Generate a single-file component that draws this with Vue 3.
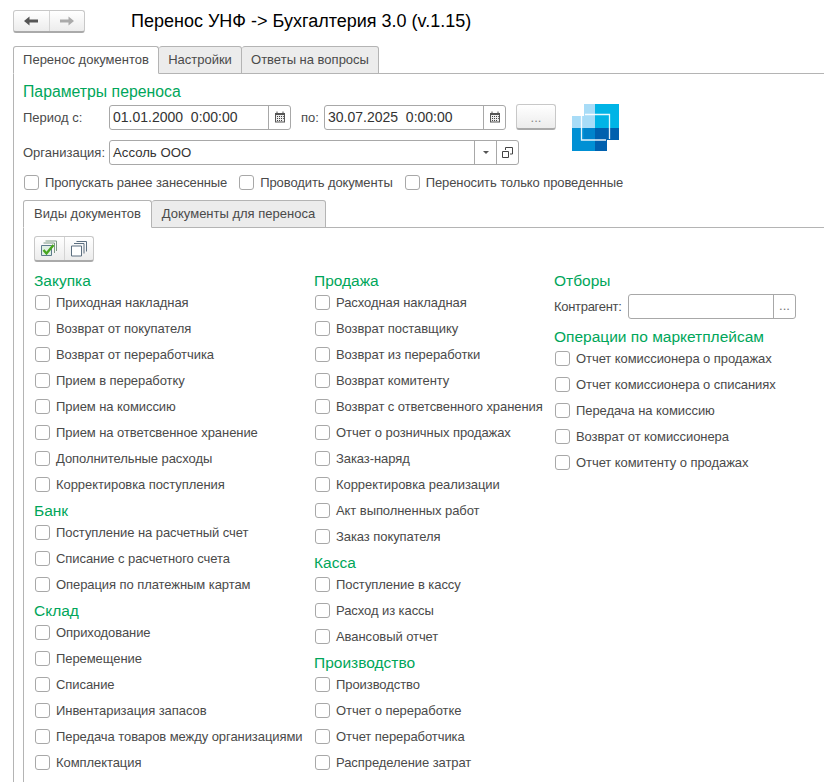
<script setup>
const columns = [
  [
    { title: 'Закупка', items: ['Приходная накладная', 'Возврат от покупателя', 'Возврат от переработчика', 'Прием в переработку', 'Прием на комиссию', 'Прием на ответсвенное хранение', 'Дополнительные расходы', 'Корректировка поступления'] },
    { title: 'Банк', items: ['Поступление на расчетный счет', 'Списание с расчетного счета', 'Операция по платежным картам'] },
    { title: 'Склад', items: ['Оприходование', 'Перемещение', 'Списание', 'Инвентаризация запасов', 'Передача товаров между организациями', 'Комплектация'] }
  ],
  [
    { title: 'Продажа', items: ['Расходная накладная', 'Возврат поставщику', 'Возврат из переработки', 'Возврат комитенту', 'Возврат с ответсвенного хранения', 'Отчет о розничных продажах', 'Заказ-наряд', 'Корректировка реализации', 'Акт выполненных работ', 'Заказ покупателя'] },
    { title: 'Касса', items: ['Поступление в кассу', 'Расход из кассы', 'Авансовый отчет'] },
    { title: 'Производство', items: ['Производство', 'Отчет о переработке', 'Отчет переработчика', 'Распределение затрат'] }
  ]
]
const market = ['Отчет комиссионера о продажах', 'Отчет комиссионера о списаниях', 'Передача на комиссию', 'Возврат от комиссионера', 'Отчет комитенту о продажах']
</script>

<template>
  <div class="page">
    <header class="top">
      <div class="nav">
        <span class="nav-btn">
          <svg width="16" height="12" viewBox="0 0 16 12"><path d="M1 6l5.500-4.500v3H15v3H6.500v3z" fill="#555"/></svg>
        </span>
        <span class="nav-btn">
          <svg width="16" height="12" viewBox="0 0 16 12"><path d="M15 6L9.500 1.500v3H1v3h8.500v3z" fill="#aaa"/></svg>
        </span>
      </div>
      <h1 class="title">Перенос УНФ -&gt; Бухгалтерия 3.0 (v.1.15)</h1>
    </header>

    <nav class="tabs outer-tabs">
      <span class="tab active t1">Перенос документов</span>
      <span class="tab t2">Настройки</span>
      <span class="tab t3">Ответы на вопросы</span>
    </nav>
    <section class="panel outer-panel">
      <div class="heading params-title">Параметры переноса</div>
      <div class="param-area">
        <div class="param-fields">
          <div class="row period">
            <label class="lbl">Период с:</label>
            <div class="field date">
              <span class="val">01.01.2000&nbsp; 0:00:00</span>
              <span class="fbtn">
                <svg width="12" height="12" viewBox="0 0 12 12"><path d="M1 2h10v9.500H1z" fill="#555"/><path d="M3 .5v2M9 .5v2" stroke="#555"/><path d="M2 4h8v6.500H2z" fill="#eee"/><path d="M3 5h1v1H3zM5 5h1v1H5zM7 5h1v1H7zM3 7h1v1H3zM5 7h1v1H5zM7 7h1v1H7zM9 5h.800v1H9zM9 7h.800v1H9zM3 9h1v1H3zM5 9h1v1H5zM7 9h1v1H7z" fill="#444"/></svg>
              </span>
            </div>
            <label class="lbl to">по:</label>
            <div class="field date">
              <span class="val">30.07.2025&nbsp; 0:00:00</span>
              <span class="fbtn">
                <svg width="12" height="12" viewBox="0 0 12 12"><path d="M1 2h10v9.500H1z" fill="#555"/><path d="M3 .5v2M9 .5v2" stroke="#555"/><path d="M2 4h8v6.500H2z" fill="#eee"/><path d="M3 5h1v1H3zM5 5h1v1H5zM7 5h1v1H7zM3 7h1v1H3zM5 7h1v1H5zM7 7h1v1H7zM9 5h.800v1H9zM9 7h.800v1H9zM3 9h1v1H3zM5 9h1v1H5zM7 9h1v1H7z" fill="#444"/></svg>
              </span>
            </div>
            <span class="more-btn">...</span>
          </div>
          <div class="row org">
            <label class="lbl">Организация:</label>
            <div class="field org-field">
              <span class="val org-val">Ассоль ООО</span>
              <span class="fbtn">
                <svg width="6" height="3" viewBox="0 0 6 3"><path d="M0 0h6L3 3z" fill="#555"/></svg>
              </span>
              <span class="fbtn">
                <svg width="13" height="13" viewBox="0 0 13 13" fill="none" stroke="#444"><path d="M4.500 4V1.500h7v6.500H9"/><path d="M1.500 5.500h6v6h-6z"/></svg>
              </span>
            </div>
          </div>
        </div>
        <svg class="logo" width="47" height="47" viewBox="0 0 47 47">
          <path d="M12 0h11v24H12z" fill="#a8dcf7"/>
          <path d="M23 0h24v24H23z" fill="#00b4e6"/>
          <path d="M0 12h12v12H0z" fill="#a8dcf7"/>
          <path d="M0 24h23v23H0z" fill="#0090d4"/>
          <path d="M23 24h12v23H23z" fill="#0060ae"/>
          <path d="M35 24h12v12H35z" fill="#0060ae"/>
          <path d="M12 24h11v12H12z" fill="#0084cc"/>
          <path d="M13 10.500h24.500V35M9.500 11v25H34" fill="none" stroke="#fff" stroke-width="1.300" opacity=".9"/>
        </svg>
      </div>
      <div class="checks">
        <label class="check"><i class="box"></i>Пропускать ранее занесенные</label>
        <label class="check"><i class="box"></i>Проводить документы</label>
        <label class="check"><i class="box"></i>Переносить только проведенные</label>
      </div>

      <nav class="tabs inner-tabs">
        <span class="tab active t4">Виды документов</span>
        <span class="tab t5">Документы для переноса</span>
      </nav>
      <section class="panel inner-panel">
        <div class="toolbar">
          <span class="tool">
            <svg width="18" height="18" viewBox="0 0 18 18">
              <path d="M5.500 1h11v10" fill="none" stroke="#7d9a86"/>
              <path d="M3.500 3h11v10" fill="none" stroke="#7d9a86"/>
              <path d="M1.500 5.500h10v10h-10z" fill="#dff0e4" stroke="#5c7a8c"/>
              <path d="M3.500 10l3 3.500 7-8.500" fill="none" stroke="#46a51e" stroke-width="2.400"/>
            </svg>
          </span>
          <span class="tool">
            <svg width="18" height="18" viewBox="0 0 18 18" fill="none" stroke="#5c6f80">
              <path d="M6.500 1.500h10v10"/>
              <path d="M4 3.500h10v10"/>
              <path d="M1.500 6h10v10h-10z" fill="#fff"/>
            </svg>
          </span>
        </div>
        <div class="cols">
          <div v-for="(col, c) in columns" :key="c" class="col">
            <template v-for="group in col" :key="group.title">
              <div class="heading">{{ group.title }}</div>
              <label v-for="item in group.items" :key="item" class="item"><i class="box"></i>{{ item }}</label>
            </template>
          </div>
          <div class="col">
            <div class="heading">Отборы</div>
            <div class="row contractor">
              <label class="lbl">Контрагент:</label>
              <div class="field contractor-field">
                <span class="val"></span>
                <span class="fbtn dots">...</span>
              </div>
            </div>
            <div class="heading market">Операции по маркетплейсам</div>
            <label v-for="item in market" :key="item" class="item"><i class="box"></i>{{ item }}</label>
          </div>
        </div>
      </section>
    </section>
  </div>
</template>

<style scoped>
.page {
  width: 824px;
  height: 782px;
  overflow: hidden;
  box-sizing: border-box;
  padding: 9px 0 0 13px;
  background: #fff;
  font-family: "Liberation Sans", Arial, sans-serif;
  font-size: 13px;
  color: #4a4a4a;
}
.top { display: flex; align-items: center; height: 24px; }
.nav {
  display: flex;
  width: 72px;
  height: 23px;
  box-sizing: border-box;
  border: 1px solid #c8c8c8;
  border-bottom: 2px solid #aaa;
  border-radius: 3px;
  background: linear-gradient(#fff, #ececec);
}
.nav-btn { flex: 1; display: flex; align-items: center; justify-content: center; }
.nav-btn + .nav-btn { border-left: 1px solid #d4d4d4; }
.title { margin: 0 0 0 46px; font-size: 18px; font-weight: 400; color: #000; white-space: nowrap; }

.tabs { display: flex; align-items: flex-end; }
.outer-tabs { margin-top: 13px; height: 28px; }
.tab {
  box-sizing: border-box;
  height: 28px;
  line-height: 26px;
  text-align: center;
  border: 1px solid #b4b4b4;
  border-left: 0;
  border-radius: 3px 3px 0 0;
  background: #ececec;
  color: #4a4a4a;
  white-space: nowrap;
}
.tab.active { background: #fff; border-left: 1px solid #b4b4b4; border-bottom-color: #fff; position: relative; z-index: 1; }
.t1 { width: 146px; }
.t2 { width: 83px; }
.t3 { width: 137px; }
.t4 { width: 129px; }
.t5 { width: 174px; }
.panel { border-top: 1px solid #b4b4b4; border-left: 1px solid #b4b4b4; margin-top: -1px; box-sizing: border-box; }
.outer-panel { padding: 7px 0 0 9px; height: 800px; }
.heading {
  box-sizing: border-box;
  height: 22px;
  padding-top: 4px;
  line-height: 20px;
  font-size: 15.500px;
  color: #00a65a;
  white-space: nowrap;
}
.params-title { height: 20px; padding-top: 1px; font-size: 15.800px; }
.param-area { display: flex; align-items: flex-start; margin-top: 3px; }
.param-fields { width: 549px; flex: none; }
.row { display: flex; align-items: center; }
.period { height: 26px; }
.org { height: 25px; margin-top: 10px; }
.lbl { width: 86px; flex: none; white-space: nowrap; }
.to { width: 33px; padding-left: 10px; box-sizing: border-box; }
.field {
  display: flex;
  height: 25px;
  box-sizing: border-box;
  border: 1px solid #a8a8a8;
  border-radius: 3px;
  background: #fff;
}
.val { flex: 1; padding-left: 3px; line-height: 23px; color: #333; font-size: 14px; white-space: nowrap; }
.org-val { font-size: 13.200px; }
.fbtn {
  width: 21px;
  flex: none;
  display: flex;
  align-items: center;
  justify-content: center;
  border-left: 1px solid #a8a8a8;
}
.date { width: 182px; }
.more-btn {
  margin-left: 10px;
  width: 40px;
  height: 26px;
  box-sizing: border-box;
  border: 1px solid #c8c8c8;
  border-bottom: 2px solid #aaa;
  border-radius: 3px;
  background: linear-gradient(#fff, #ececec);
  text-align: center;
  line-height: 26px;
  color: #888;
}
.org-field { width: 410px; }
.logo { flex: none; }
.checks { display: flex; margin: 5px 0 0 1px; height: 24px; align-items: center; gap: 12px; letter-spacing: -.1px; }
.check, .item { display: flex; align-items: center; white-space: nowrap; color: #4a4a4a; }
.box {
  display: block;
  box-sizing: border-box;
  width: 15px;
  height: 15px;
  margin-right: 6px;
  border: 1px solid #a8a8a8;
  border-radius: 3px;
  background: #fff;
  flex: none;
}
.inner-tabs { margin-top: 6px; height: 28px; }
.inner-panel { padding: 8px 0 0 10px; height: 600px; }
.toolbar {
  display: flex;
  width: 60px;
  height: 26px;
  box-sizing: border-box;
  border: 1px solid #c8c8c8;
  border-bottom: 2px solid #aaa;
  border-radius: 3px;
  background: linear-gradient(#fff, #ececec);
}
.tool { flex: 1; display: flex; align-items: center; justify-content: center; }
.tool + .tool { border-left: 1px solid #d4d4d4; }
.cols { display: flex; margin-top: 5px; }
.col { width: 280px; flex: none; }
.col:nth-child(2) { width: 240px; }
.col:last-child { width: 270px; }
.item { height: 26px; padding-left: 1px; letter-spacing: -.07px; }
.contractor { height: 25px; margin-top: 5px; }
.contractor .lbl { width: 74px; letter-spacing: -.3px; }
.contractor-field { width: 168px; }
.dots { color: #777; line-height: 22px; align-items: flex-start; }
.market { margin-top: 4px; }
</style>
